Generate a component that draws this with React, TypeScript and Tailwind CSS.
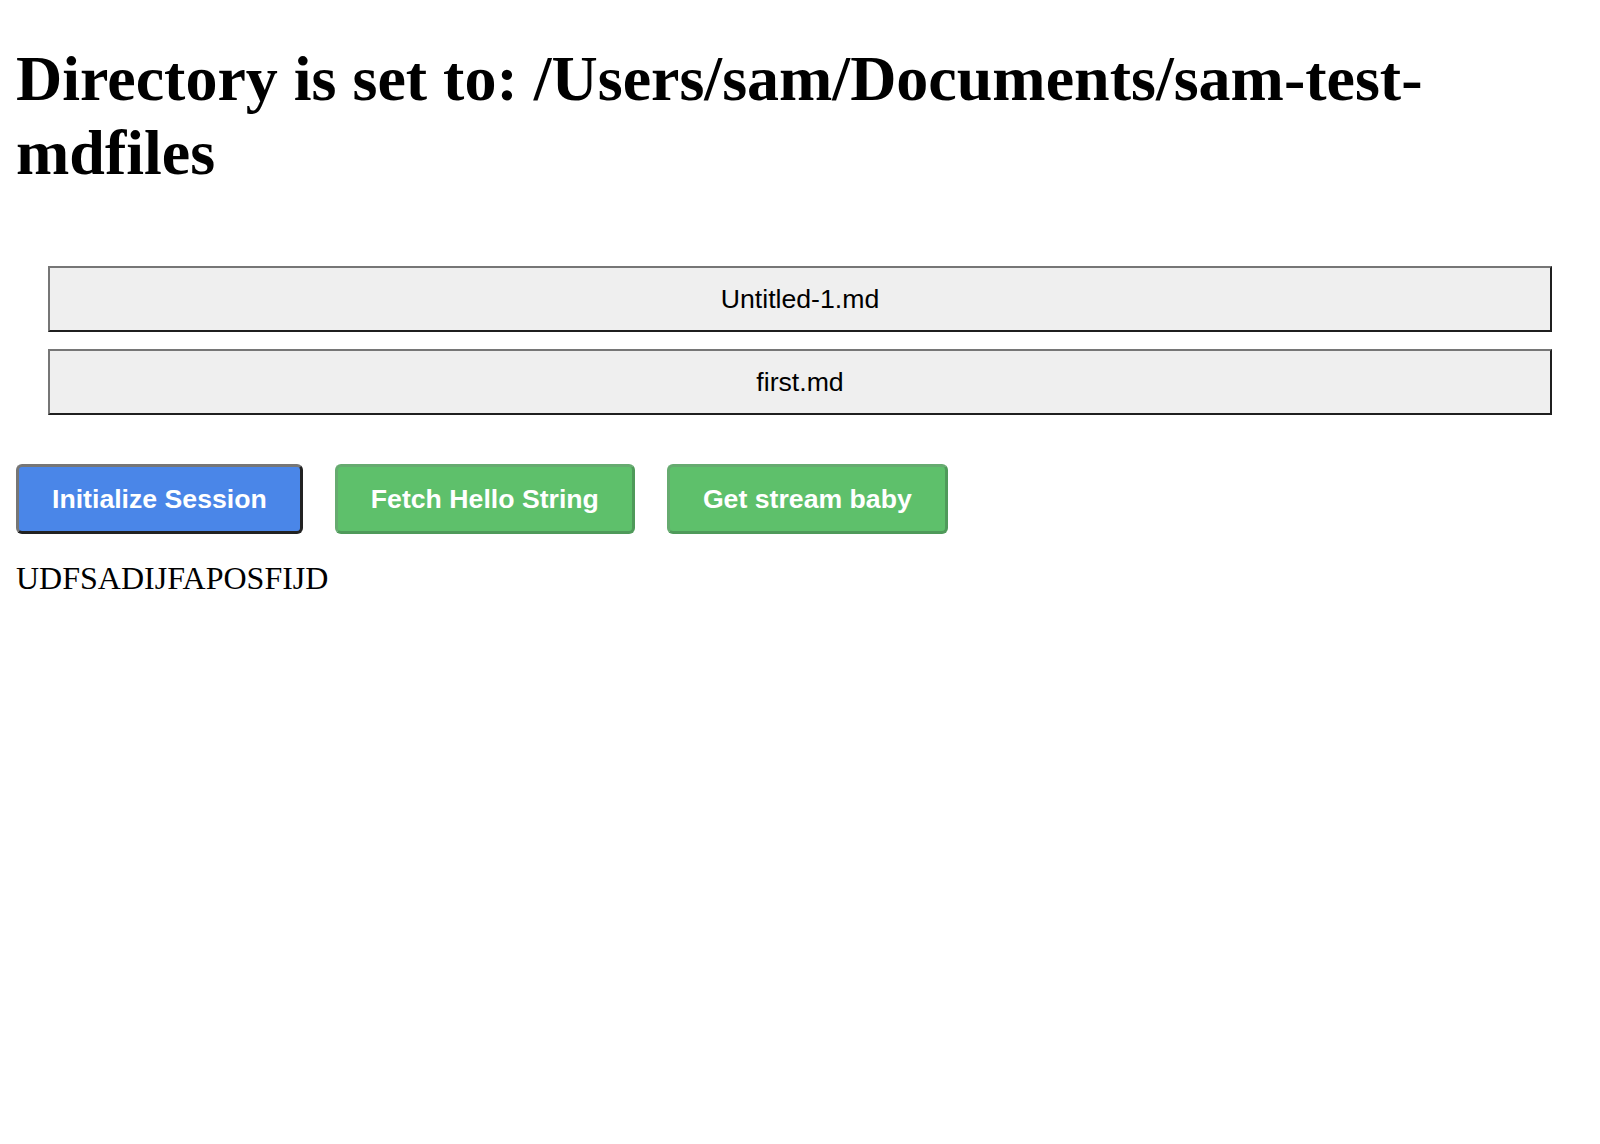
export default function App() {
  const files = ["Untitled-1.md", "first.md"];

  return (
    <div className="min-h-screen bg-white px-[16px] pb-[16px] pt-px text-black font-['Liberation_Serif','Times_New_Roman',serif]">
      <h1 className="mt-[41px] text-[64px] font-bold leading-[74px]">
        Directory is set to: /Users/sam/Documents/sam-test-mdfiles
      </h1>

      {/* File list */}
      <div className="mx-[32px] mt-[76px] flex flex-col gap-[17px]">
        {files.map((f) => (
          <button
            key={f}
            className="w-full bg-[#efefef] border-2 border-t-[#767676] border-l-[#767676] border-b-[#1f1f1f] border-r-[#1f1f1f] py-[16px] text-center text-[26.67px] leading-[30px] text-black font-['Liberation_Sans',Arial,sans-serif]"
          >
            {f}
          </button>
        ))}
      </div>

      {/* Actions */}
      <div className="mt-[49px] flex gap-[32px]">
        <button className="rounded-[6px] bg-[#4a86e8] border-[3px] border-t-[#767676] border-l-[#767676] border-b-[#222222] border-r-[#222222] px-[33px] py-[17px] text-[26.67px] leading-[30px] font-bold text-white font-['Liberation_Sans',Arial,sans-serif]">
          Initialize Session
        </button>
        <button className="rounded-[6px] bg-[#5ec06b] border-[3px] border-t-[#66ab70] border-l-[#66ab70] border-b-[#4f9a5a] border-r-[#4f9a5a] px-[33px] py-[17px] text-[26.67px] leading-[30px] font-bold text-white font-['Liberation_Sans',Arial,sans-serif]">
          Fetch Hello String
        </button>
        <button className="rounded-[6px] bg-[#5ec06b] border-[3px] border-t-[#66ab70] border-l-[#66ab70] border-b-[#4f9a5a] border-r-[#4f9a5a] px-[33px] py-[17px] text-[26.67px] leading-[30px] font-bold text-white font-['Liberation_Sans',Arial,sans-serif]">
          Get stream baby
        </button>
      </div>

      <p className="mt-[26px] text-[32px] leading-[37px]">UDFSADIJFAPOSFIJD</p>
    </div>
  );
}
